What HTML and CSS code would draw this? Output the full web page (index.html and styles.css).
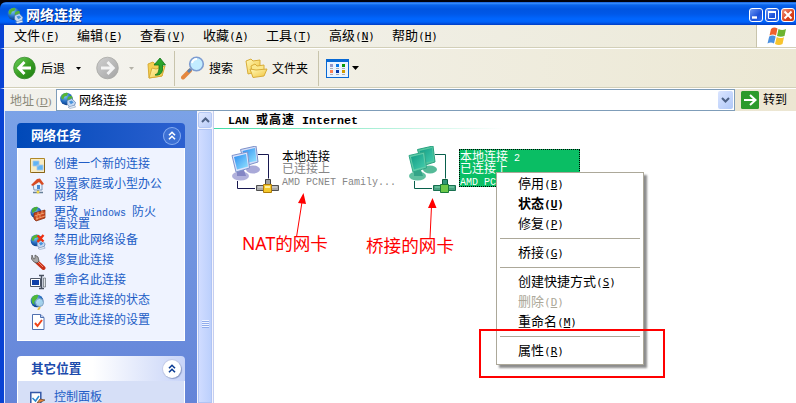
FILE: index.html
```html
<!DOCTYPE html>
<html lang="zh-CN">
<head>
<meta charset="utf-8">
<title>网络连接</title>
<link rel="stylesheet" href="styles.css">
</head>
<body>
<svg width="0" height="0" class="defs">
  <defs>
    <radialGradient id="gGlobe" cx=".4" cy=".3" r=".8"><stop offset="0" stop-color="#7cc4f4"/><stop offset=".6" stop-color="#1c62b8"/><stop offset="1" stop-color="#0a2c6c"/></radialGradient>
    <linearGradient id="gGreen" x1="0" y1="0" x2="1" y2="1"><stop offset="0" stop-color="#6cd05c"/><stop offset=".5" stop-color="#3a9f24"/><stop offset="1" stop-color="#1c7c10"/></linearGradient>
    <linearGradient id="gGrey" x1="0" y1="0" x2="1" y2="1"><stop offset="0" stop-color="#d0d0d0"/><stop offset="1" stop-color="#a4a4a4"/></linearGradient>
    <linearGradient id="gFold" x1="0" y1="0" x2="1" y2="1"><stop offset="0" stop-color="#fff9b8"/><stop offset="1" stop-color="#f2c43c"/></linearGradient>
    <linearGradient id="gScr" x1="0" y1="0" x2="1" y2="1"><stop offset="0" stop-color="#2c8cf0"/><stop offset="1" stop-color="#94e4ff"/></linearGradient>
    <linearGradient id="gScr2" x1="0" y1="0" x2="1" y2="1"><stop offset="0" stop-color="#129c84"/><stop offset="1" stop-color="#44ccac"/></linearGradient>
    <symbol id="globe" viewBox="0 0 18 18">
      <circle cx="7.3" cy="7.3" r="6.6" fill="url(#gGlobe)"/>
      <path d="M2 4Q5 0 9 1L8 4 5 5 4 8 2 7ZM9 5l4-1 1 4-3 2-3-2Z" fill="#56b534"/>
      <path d="M8 9l5-2 4 4-1 3-5 2-3-3Z" fill="#c6d9f3" stroke="#426fa8" stroke-width=".7"/>
      <path d="M10 10l3-1 2 2-3 2Z" fill="#4a94dc"/>
      <path d="M9 16l7-2 1 2-6 1.500Z" fill="#e4eef8" stroke="#6785b0" stroke-width=".5"/>
    </symbol>
    <symbol id="chev" viewBox="0 0 18 18">
      <path d="M6 8.300l3-3 3 3M6 12.300l3-3 3 3" fill="none" stroke="currentColor" stroke-width="1.600"/>
    </symbol>
  </defs>
</svg>

<div class="window">
  <header class="titlebar">
    <svg class="tb-ico" width="17" height="17"><use href="#globe"/></svg>
    <h1>网络连接</h1>
    <div class="winbtns">
      <span class="wb"><svg width="12" height="12"><path d="M2 8.500h5" stroke="#fff" stroke-width="2.400"/></svg></span>
      <span class="wb"><svg width="12" height="12"><path d="M2.500 3v6.500h7V3Z" fill="none" stroke="#fff"/><path d="M2 3h8" stroke="#fff" stroke-width="2"/></svg></span>
      <span class="wb close"><svg width="12" height="12"><path d="M2.500 2.500l7 7M9.500 2.500l-7 7" stroke="#fff" stroke-width="2"/></svg></span>
    </div>
  </header>

  <nav class="menubar">
    <div class="menus">
      <span>文件<i>(<u>F</u>)</i></span><span>编辑<i>(<u>E</u>)</i></span><span>查看<i>(<u>V</u>)</i></span><span>收藏<i>(<u>A</u>)</i></span><span>工具<i>(<u>T</u>)</i></span><span>高级<i>(<u>N</u>)</i></span><span>帮助<i>(<u>H</u>)</i></span>
    </div>
    <div class="flag">
      <svg width="20" height="19" viewBox="0 0 20 19">
        <path d="M4 2Q7-.5 10.500 1.500L9 8.500Q6 6.500 2.500 8.500Z" fill="#f0602c"/>
        <path d="M11.500 2Q15 4 19 2L17.500 9Q14 10.500 10 9Z" fill="#6cb430"/>
        <path d="M2.200 9.500Q5.500 7.500 8.700 9.500L7 16.500Q4 14.500.5 16.500Z" fill="#4a90e0"/>
        <path d="M9.700 10Q13 12 17 10.200L15.500 17Q12 19 8 17Z" fill="#f8c42c"/>
      </svg>
    </div>
  </nav>

  <div class="toolbar">
    <svg class="circ" width="23" height="24"><circle cx="11.500" cy="12" r="10.800" fill="url(#gGreen)" stroke="#3a8c30" stroke-width=".8"/><path d="M18 12H7M11.500 6L5.700 12l5.800 6" fill="none" stroke="#fff" stroke-width="2.800"/></svg>
    <span class="lbl back">后退</span>
    <svg class="car1" width="5" height="3"><path d="M0 0h5L2.500 3Z"/></svg>
    <svg class="fwd" width="23" height="24"><circle cx="11.500" cy="12" r="10.800" fill="url(#gGrey)" stroke="#a8a8a4" stroke-width=".8"/><path d="M5 12h11M11.500 6l5.800 6-5.800 6" fill="none" stroke="#f4f4f4" stroke-width="2.800"/></svg>
    <svg class="car2" width="5" height="3"><path d="M0 0h5L2.500 3Z" fill="#b4b2a8"/></svg>
    <svg class="up" width="20" height="23" viewBox="0 0 20 23">
      <path d="M1 7l5-2 2 2 7-1v13L2 21Z" fill="#f5cf50" stroke="#d8ac38"/>
      <path d="M2 21L5 11l4 1 9-3-3 10Z" fill="url(#gFold)" stroke="#d8ac38"/>
      <path d="M8 18q4-1 4-6V8H7l6-7 5.500 7H15.500v5q-1 6-7.500 5Z" fill="#2ba42c" stroke="#13751a" stroke-width=".8"/>
    </svg>
    <b class="sep s1"></b>
    <svg class="find" width="24" height="24" viewBox="0 0 24 24">
      <path d="M2 21.500l7-7" stroke="#e48840" stroke-width="4" stroke-linecap="round"/><path d="M7 16l3-3" stroke="#5b84b4" stroke-width="3"/>
      <circle cx="15.500" cy="8" r="6.800" fill="#c2ecff" stroke="#7e9cd0" stroke-width="1.600"/><path d="M11 7q1-4 5-4" fill="none" stroke="#fff" stroke-width="2"/>
    </svg>
    <span class="lbl">搜索</span>
    <svg class="folders" width="23" height="21" viewBox="0 0 23 21">
      <path d="M1 3l5-2 2 2 7-1v11L3 16Z" fill="url(#gFold)" stroke="#d8ac38"/>
      <path d="M6 8l4-2 2 2 7-1v9L8 19Z" fill="#fbe88c" stroke="#d8ac38"/>
      <path d="M8 19.500L5 11l6 1 11-1-3 7Z" fill="url(#gFold)" stroke="#d8ac38"/>
    </svg>
    <span class="lbl">文件夹</span>
    <b class="sep s2"></b>
    <svg class="views" width="23" height="19" viewBox="0 0 23 19" shape-rendering="crispEdges">
      <rect width="23" height="19" rx="1" fill="#0869d4"/><rect x="1" y="3" width="21" height="15" fill="#eaf4ff"/>
      <path d="M4 5h3v3H4Z" fill="#9898c8"/><path d="M10 5h3v3h-3Z" fill="#0878e8"/><path d="M16 5h3v3h-3Z" fill="#089808"/>
      <path d="M4 11h3v3H4Z" fill="#ff8050"/><path d="M10 11h3v3h-3Z" fill="#0838a8"/><path d="M16 11h3v3h-3Z" fill="#d09a00"/>
      <path d="M4 9h3v1H4ZM10 9h3v1h-3ZM16 9h3v1h-3ZM4 15h3v1H4ZM10 15h3v1h-3ZM16 15h3v1h-3Z" fill="#a8acb4"/>
    </svg>
    <svg class="car3" width="7" height="4"><path d="M0 0h7L3.500 4Z"/></svg>
  </div>

  <div class="addressbar">
    <label>地址<i>(<u>D</u>)</i></label>
    <div class="addr">
      <svg width="18" height="17"><use href="#globe"/></svg>
      <span>网络连接</span>
      <div class="drop"><svg width="9" height="6"><path d="M1 1l3.500 3.500L8 1" fill="none" stroke="#4d6185" stroke-width="2"/></svg></div>
    </div>
    <svg class="go" width="18" height="18"><rect width="18" height="18" rx="1.500" fill="#2c9a2c"/><path d="M3 9h11M9 4l5.500 5L9 14" fill="none" stroke="#fff" stroke-width="2"/></svg>
    <span class="golbl">转到</span>
  </div>

  <div class="content">
    <aside class="side">
      <section class="panel">
        <h2><span class="cap">网络任务</span><span class="round dark"><svg width="18" height="18"><use href="#chev"/></svg></span></h2>
        <ul>
          <li><svg width="16" height="16"><path d="M.5.5h14v14H.5Z" fill="#f8ecc4" stroke="#b08828"/><path d="M1.500 14.500h13V2" fill="none" stroke="#886418"/><path d="M3 3h6v5H3ZM7 7h6v5H7Z" fill="#62b4f4" stroke="#a8c8e8" stroke-width=".8"/></svg><a>创建一个新的连接</a></li>
          <li><svg width="16" height="16"><path d="M3 6.500L8 2l4 4v6H4Z" fill="#e4f2ff" stroke="#8098b8"/><path d="M1 7l6-6 3-.5L14 6l-2 1-3-3-6 4Z" fill="#d84c24"/><path d="M7 7h3v4H7Z" fill="#4888d0"/><path d="M8 12v3M3 14.500h10" stroke="#688098" stroke-width="1.500"/><circle cx="8" cy="14" r="1.500" fill="#f4d848"/></svg><a>设置家庭或小型办公网络</a></li>
          <li><svg width="16" height="16"><circle cx="6" cy="6.500" r="5.500" fill="url(#gGlobe)"/><path d="M2 3q3-3 6-2L6 5 2 7Z" fill="#48ac38"/><path d="M4 7l11-3v8L6 15l-2-2Z" fill="#c84820" stroke="#802808" stroke-width=".7"/><path d="M4.500 10l10-3M6 13l9-3M8 6v3M12 5v3M10 9v2M7 10v4" stroke="#f8b07c" stroke-width=".8"/></svg><a>更改<i> Windows </i>防火墙设置</a></li>
          <li><svg width="16" height="16"><use href="#globe"/><path d="M7.500 1.500l6 6M13.500 1l-6 7" stroke="#f03010" stroke-width="2.300"/></svg><a>禁用此网络设备</a></li>
          <li><svg width="16" height="16"><path d="M7 8l6.500 6" stroke="#c83018" stroke-width="4" stroke-linecap="round"/><path d="M8 8l5 5" stroke="#f08870"/><path d="M2 1l-.5 4L4 8l3 1 2-2-1-4-3-2v3.500L3.500 5Z" fill="#a8a8a8" stroke="#585858" stroke-width=".8"/></svg><a>修复此连接</a></li>
          <li><svg width="16" height="16"><path d="M.5 4.500h10v8H.5Z" fill="#fff" stroke="#505868"/><path d="M2 6h7v5H2Z" fill="#1040a8"/><path d="M9 1.500h5M9 14.500h5M11.500 1.500v13" stroke="#485060" stroke-width="1.500"/><path d="M13.500 4v9h2V4Z" fill="#e0e4e8" stroke="#606870" stroke-width=".7"/></svg><a>重命名此连接</a></li>
          <li><svg width="16" height="16"><circle cx="7" cy="7" r="6.300" fill="url(#gGlobe)"/><path d="M1.500 4q3-4 7-3L7 5 4 8 5 11 2 9Z" fill="#50b838"/><circle cx="9.500" cy="8.500" r="4" fill="#bce8f8" fill-opacity=".85" stroke="#789cc0"/><path d="M10 13l-2 3" stroke="#e8c040" stroke-width="2"/></svg><a>查看此连接的状态</a></li>
          <li><svg width="16" height="16"><path d="M2.500.5h8l3.500 3v12H2.500Z" fill="#fff" stroke="#5070b0"/><path d="M10.500.5v3H14" fill="#c0d0f0" stroke="#5070b0"/><path d="M5 9l2.500 3L12 6" fill="none" stroke="#f04418" stroke-width="2"/></svg><a>更改此连接的设置</a></li>
        </ul>
      </section>
      <section class="panel other">
        <h2><span class="cap">其它位置</span><span class="round"><svg width="18" height="18"><use href="#chev"/></svg></span></h2>
        <ul>
          <li><svg width="16" height="16"><path d="M.8 1.500h10v12H.8Z" fill="#fff" stroke="#3458a8" stroke-width="1.500"/><path d="M2.500 7l3 3L9 5" fill="none" stroke="#2888d0" stroke-width="1.500"/><path d="M7 12l3-4 5 1-4 2Z" fill="#f08838" stroke="#604028" stroke-width=".7"/></svg><a>控制面板</a></li>
        </ul>
      </section>
    </aside>
    <div class="scroll">
      <div class="sbtn"><svg width="9" height="6"><path d="M1 5l3.500-3.500L8 5" fill="none" stroke="#4d6185" stroke-width="2"/></svg></div>
      <div class="thumb"><span></span></div>
    </div>
    <main>
      <h3><i>LAN </i>或高速<i> Internet</i></h3>
      <div class="rule"></div>
      <div class="conns">
        <div class="conn">
          <svg width="48" height="48" viewBox="0 0 48 48">
            <path d="M27 8.500h10.500v24M6.500 35v7.500H24" fill="none" stroke="#181850"/>
            <ellipse cx="22" cy="23.500" rx="7" ry="4" fill="#a9a9d8"/><path d="M9.500 3.500L25 0l2 16-13 4Z" fill="#d4dcf8" stroke="#7c90c8"/><path d="M11.500 5L24 2l1.500 13L15 17Z" fill="url(#gScr)"/>
            <ellipse cx="9.500" cy="30" rx="8.500" ry="4.500" fill="#b1b1dc"/><path d="M6 24h7l2 6H6Z" fill="#8486c4"/><path d="M1 9.500L16.500 6l2 16L5 26Z" fill="#dce4fc" stroke="#8094cc"/><path d="M3 11l12-3 2 12.500-11 3Z" fill="url(#gScr)"/>
            <path d="M34.500 33.500h5v8h-5Z" fill="#a0a0a0" stroke="#444"/><path d="M25.500 39.500h22v5h-22Z" fill="#a8a8a8" stroke="#505050"/><path d="M27 41h19" stroke="#ddd"/><path d="M32.500 38.500h8v8h-8Z" fill="#f4c82c" stroke="#b07c08"/><path d="M34 41h5" stroke="#fff0a0" stroke-width="2"/>
          </svg>
          <p>本地连接<br><em>已连接上<br><i>AMD PCNET Family...</i></em></p>
        </div>
        <div class="conn sel">
          <svg width="48" height="48" viewBox="0 0 48 48">
            <path d="M27 8.500h10.500v24M6.500 35v7.500H24" fill="none" stroke="#08604c"/>
            <ellipse cx="22" cy="23.500" rx="7" ry="4" fill="#55ba98"/><path d="M9.500 3.500L25 0l2 16-13 4Z" fill="#58c8a0" stroke="#28a080"/><path d="M11.500 5L24 2l1.500 13L15 17Z" fill="url(#gScr2)"/>
            <ellipse cx="9.500" cy="30" rx="8.500" ry="4.500" fill="#5fc0a0"/><path d="M6 24h7l2 6H6Z" fill="#34a488"/><path d="M1 9.500L16.500 6l2 16L5 26Z" fill="#60cca8" stroke="#30a888"/><path d="M3 11l12-3 2 12.500-11 3Z" fill="url(#gScr2)"/>
            <path d="M34.500 33.500h5v8h-5Z" fill="#309878" stroke="#0c5c3c"/><path d="M25.500 39.500h22v5h-22Z" fill="#48a080" stroke="#187050"/><path d="M27 41h19" stroke="#80d8b0"/><path d="M32.500 38.500h8v8h-8Z" fill="#6cc848" stroke="#187c38"/>
          </svg>
          <p>本地连接<i> 2</i><br>已连接上<br><i>AMD PC</i></p>
        </div>
      </div>
    </main>
  </div>
</div>

<div class="note n1">NAT的网卡</div>
<div class="note n2">桥接的网卡</div>
<svg class="arrows" width="796" height="403"><path d="M296.500 237L302 202M430 238l1.500-32" stroke="#f00" fill="none"/><path d="M303.500 193l2.500 11-8-1ZM432.500 198l4 10h-8.500Z" fill="#f00"/></svg>

<div class="ctx">
  <div>停用<i>(<u>B</u>)</i></div>
  <div class="bold">状态<i>(<u>U</u>)</i></div>
  <div>修复<i>(<u>P</u>)</i></div>
  <hr>
  <div>桥接<i>(<u>G</u>)</i></div>
  <hr>
  <div>创建快捷方式<i>(<u>S</u>)</i></div>
  <div class="off">删除<i>(<u>D</u>)</i></div>
  <div>重命名<i>(<u>M</u>)</i></div>
  <hr>
  <div>属性<i>(<u>R</u>)</i></div>
</div>
<div class="redbox"></div>
</body>
</html>
```
FILE: styles.css
```css
* { box-sizing: border-box; margin: 0; padding: 0; }
body { width: 796px; height: 403px; overflow: hidden; background: #02020c; font: 12px/12px "Noto Sans CJK SC", sans-serif; color: #000; position: relative; white-space: nowrap; }
i { font-style: normal; font-family: "Liberation Mono", monospace; font-size: 10px; line-height: 0; white-space: pre; }
svg { display: block; flex: none; }
.defs { position: absolute; }
u { text-underline-offset: 1px; text-decoration-thickness: 1px; }

.window { height: 403px; padding-top: 2px; display: flex; flex-direction: column; }
.titlebar { height: 23px; flex: none; display: flex; align-items: center; padding: 3px 1px 0 7px; border-radius: 6px 0 0 0; background: linear-gradient(#0a48c8 0, #3d93ff 1px, #0a64ec 3px, #0054e0 7px, #0058e8 12px, #0066ff 17px, #0062f8 20px, #003cc4 23px); }
.titlebar h1 { font-size: 14px; line-height: 16px; color: #fff; margin: -3px 0 0 2px; text-shadow: 1px 1px #0a2c80; }
.winbtns { margin-left: auto; display: flex; gap: 2px; }
.wb { width: 14px; height: 14px; border: 1px solid #fff; border-radius: 3px; background: linear-gradient(135deg, #6e98f4, #1c50d8 60%, #2c6cf0); }
.wb.close { background: linear-gradient(135deg, #f0967c, #d8401c 60%, #c83c18); }

.menubar, .toolbar, .addressbar, .content { border-left: 4px solid #0842d4; flex: none; }
.menubar { height: 24px; display: flex; background: linear-gradient(90deg, #f4f4f0, #ece9d8); border-bottom: 1px solid #fff; }
.menus { flex: 1; display: grid; grid-template-columns: repeat(7, 63px); padding-left: 10px; line-height: 20px; font-size: 13px; border-bottom: 1px solid #d2cfb8; border-right: 1px solid #c8c4ac; }
.menus i, .ctx i { font-family: "DejaVu Sans Mono", monospace; font-size: 11px; }
.flag { width: 39px; height: 23px; background: #fff; border-bottom: 1px solid #d2cfb8; padding: 2px 0 0 10px; }

.toolbar { height: 40px; display: flex; align-items: center; padding: 0 0 1px 9px; background: linear-gradient(90deg, #f5f4f0, #ece8d4); border-bottom: 1px solid #fff; box-shadow: inset 0 -1px #d2cfb8; }
.lbl { line-height: 16px; }
.back { margin-left: 5px; }
.car1 { margin-left: 11px; }
.fwd { margin-left: 15px; }
.car2 { margin-left: 10px; }
.up { margin-left: 13px; }
.sep { width: 1px; height: 35px; background: #c8c4ac; }
.s1 { margin-left: 7px; }
.find { margin: 0 4px 0 6px; }
.folders { margin: 0 4px 0 12px; }
.s2 { margin: 0 7px 0 10px; }
.car3 { margin-left: 3px; }

.addressbar { height: 22px; display: flex; align-items: center; background: linear-gradient(90deg, #f2f1ec, #ece6d2); }
.addressbar label { width: 52px; padding-left: 6px; color: #8a8878; line-height: 18px; }
.addressbar label i { font-family: "Liberation Serif", serif; font-size: 11px; margin-left: 2px; }
.addr { width: 679px; height: 22px; background: #fff; border: 1px solid #7f9db9; display: flex; align-items: center; padding-left: 2px; }
.addr > span { margin-left: 2px; line-height: 20px; }
.drop { width: 15px; height: 18px; margin: 0 1px 0 auto; border-radius: 2px; background: linear-gradient(135deg, #dbe5ff, #b0c8f8); display: grid; place-items: center; }
.go { margin-left: 6px; }
.golbl { margin-left: 4px; padding-bottom: 2px; line-height: 18px; }

.content { flex: 1; display: flex; min-height: 0; background: #fff; }
.side { width: 193px; border-left: 1px solid #dfe8fc; background: linear-gradient(#7ba2e7, #6484d8); padding: 12px 0 0 12px; overflow: hidden; }
.panel { width: 168px; margin-bottom: 15px; }
.panel h2 { height: 25px; display: flex; align-items: center; justify-content: space-between; padding: 0 4px 0 14px; border-radius: 4px 4px 0 0; background: linear-gradient(90deg, #0049b8, #2c60d0); color: #fff; font-size: 12.600px; line-height: 16px; }
.cap { padding-bottom: 2px; }
.panel ul { list-style: none; height: 193px; padding: 9px 12px 0; border: 1px solid #fff; border-top: 0; background: #eff3ff; display: flex; flex-direction: column; gap: 4px; }
.panel li { display: flex; gap: 8px; min-height: 16px; color: #215dc6; }
.panel li svg { margin: 1px 0 -1px; }
.panel a { width: 110px; white-space: normal; }
.other h2 { background: linear-gradient(90deg, #fff 45%, #c8d4f8); color: #1c4bac; }
.other ul { height: 40px; background: #d6dff7; }
.round { width: 18px; height: 18px; border-radius: 50%; background: #fff; color: #0c3c94; box-shadow: 1px 1px 1px #8c9cc8, 0 0 0 1px #c4cce8; }
.round.dark { background: #3c70d4; color: #fff; box-shadow: inset 0 0 0 1px #86abf0; }

.scroll { width: 17px; padding: 1px 1px 0 1px; background: #f4f4fc; border-right: 1px solid #c4cef0; display: flex; flex-direction: column; }
.sbtn { height: 16px; flex: none; border: 1px solid #b4c8f4; border-radius: 2px; background: linear-gradient(135deg, #e0e8ff, #b8ccf8); display: grid; place-items: center; margin-bottom: 1px; }
.thumb { flex: 1; border: 1px solid #b0c4f4; background: linear-gradient(90deg, #d0dcff, #bcd0fc); padding: 190px 0 0 3px; }
.thumb span { display: block; width: 7px; height: 8px; background: repeating-linear-gradient(#f0f4ff 0 1px, #90acec 1px 2px); }

main { flex: 1; min-width: 0; }
main h3 { padding: 1px 0 0 14px; height: 17px; font-size: 12px; line-height: 14px; letter-spacing: 1px; }
main h3 i { font-size: 11.670px; letter-spacing: 0; }
.rule { height: 1px; width: 290px; background: linear-gradient(90deg, #40dca4, #fff); }
.conns { display: grid; grid-template-columns: 177px 178px; padding: 17px 0 0 17px; }
.conn { display: flex; color: #000; }
.conn p { margin-left: 2px; padding: 4px 0 0 1px; line-height: 12px; }
.conn em { font-style: normal; color: #868686; }
.sel p { width: 121px; height: 38px; margin: 3px 0 0 3px; padding: 1px 0 0 1px; background: #0abe64; color: #fff; outline: 1px dotted #000; outline-offset: -1px; }

.note { position: absolute; font: 17.600px/20px "Noto Sans", "Noto Sans CJK SC", sans-serif; color: #f00; }
.n1 { left: 242px; top: 233px; }
.n2 { left: 366px; top: 235px; }
.arrows { position: absolute; left: 0; top: 0; }

.ctx { position: absolute; left: 496px; top: 172px; width: 148px; height: 193px; padding: 1px 3px; background: #fff; border: 1px solid #aca899; box-shadow: 3px 3px 2px rgba(0, 0, 0, .45); font-size: 13px; line-height: 18px; }
.ctx div { height: 20px; padding-left: 18px; }
.ctx hr { border: 0; height: 1px; background: #aca899; margin: 4px 0; }
.ctx .bold { font-weight: 700; }
.ctx .off { color: #aca899; }
.redbox { position: absolute; left: 479px; top: 329px; width: 186px; height: 49px; border: 2px solid #f00; }
```
